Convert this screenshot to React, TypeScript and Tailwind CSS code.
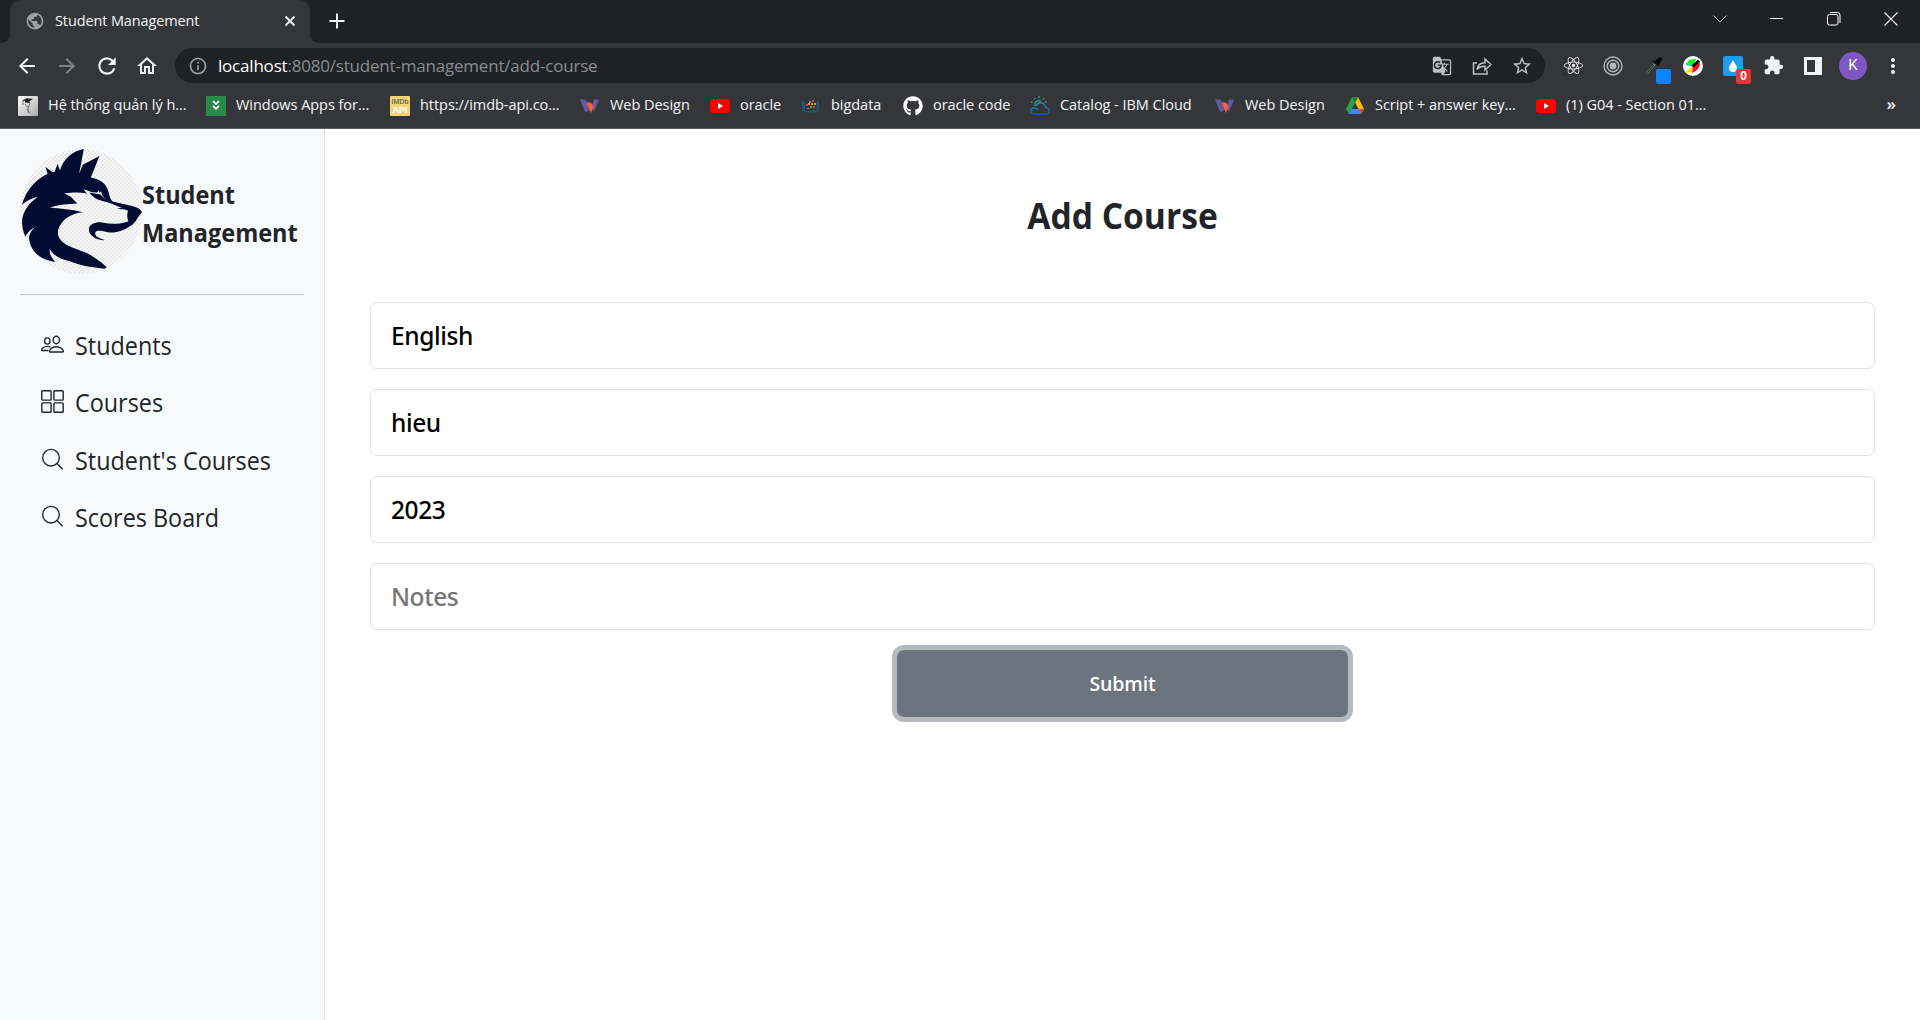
import type { ReactNode } from "react";
import { SiReact } from "react-icons/si";
import { FaGithub } from "react-icons/fa";
import {
  MdArrowBack,
  MdArrowForward,
  MdRefresh,
  MdOutlineHome,
  MdInfoOutline,
  MdStarBorder,
  MdGTranslate,
  MdExtension,
  MdMoreVert,
  MdPublic,
} from "react-icons/md";

function WolfLogo() {
  return (
    <svg viewBox="30 27 367 376" preserveAspectRatio="none" className="h-[125px] w-[122px] shrink-0">
      <defs>
        <pattern id="checks" width="12" height="12" patternUnits="userSpaceOnUse">
          <rect width="12" height="12" fill="#fafafa" />
          <rect width="6" height="6" fill="#e7e7e7" />
          <rect x="6" y="6" width="6" height="6" fill="#e7e7e7" />
        </pattern>
      </defs>
      <ellipse cx="213.500" cy="215" rx="183.500" ry="188" fill="url(#checks)" />
      <path
        fill="#020c33"
        d="M36 195 C46 156 75 118 113 102 L107 81 L127 96 L134 96 L143 71 L150 92 C160 55 192 32 222 27 L208 101 L219 74 L269 48 L243 113 C270 118 289 130 296 155 C300 171 302 179 309 185 C332 191 366 196 382 204 C392 208 397 214 396 219 C392 224 384 233 379 243 L369 254 C350 268 322 280 298 278 C286 276 274 270 261 274 C253 278 256 287 264 292 C270 296 278 299 286 301 C262 303 238 288 237 269 C238 252 258 246 277 248 C303 253 327 253 346 247 L356 245 C352 235 351 224 355 213 L345 209 L321 207 L336 204 C316 196 300 188 281 184 L250 178 L228 160 C206 157 190 158 163 160 L183 171 L202 191 C175 192 145 195 120 203 C150 207 185 208 218 217 C190 220 166 233 155 250 C142 264 141 286 150 297 C163 321 207 328 237 343 C260 356 280 372 291 383 L285 387 C250 384 210 378 180 365 C151 359 128 345 119 327 C118 345 127 355 136 367 C104 362 60 345 57 291 C60 279 66 270 75 262 C62 268 53 277 46 291 C27 246 34 207 84 171 C65 174 50 184 36 195 Z"
      />
      <path
        fill="#f7f7f8"
        d="M222 148 L247 157 L262 158 L267 151 L269 159 L274 154 L277 166 L290 182 L272 164 L238 158 C250 173 263 180 279 184 L254 181 C238 174 231 162 222 148 Z"
      />
    </svg>
  );
}

const YouTube = () => (
  <svg viewBox="0 0 20 20" className="size-5">
    <rect y="3" width="20" height="14" rx="3.500" fill="#f00" />
    <path d="M8 7 L13 10 L8 13 Z" fill="#fff" />
  </svg>
);

const WebDesign = () => (
  <svg viewBox="0 0 20 20" className="size-5">
    <path d="M0 3.500 H5.500 L9.500 14 L6.500 16 Q5 16 4.300 14 Z" fill="#6658a6" />
    <path d="M14 3.500 H19 L14 16 L11.500 11 Z" fill="#6658a6" />
    <path d="M6.500 6.500 Q12 5 13.500 11 L11 17 Z" fill="#fa6335" />
  </svg>
);

const Graduate = () => (
  <svg viewBox="0 0 20 20" className="size-5">
    <defs>
      <linearGradient id="silver" x1="0" y1="0" x2="1" y2="1">
        <stop offset="0" stopColor="#fff" />
        <stop offset="1" stopColor="#aaa" />
      </linearGradient>
    </defs>
    <rect width="20" height="20" rx="1" fill="url(#silver)" />
    <path d="M4 4.500 L9 2.200 L15 3 L11 5.500 Z M7 5 L12 5.500 L11.500 7 L7 6.500 Z" fill="#222" />
    <path d="M5 4.500 V9 M7.500 8 Q8 11.500 11 10.500 L12 7 M10 11 L11 17 L9 13" fill="none" stroke="#666" strokeWidth=".9" />
  </svg>
);

const WindowsApps = () => (
  <svg viewBox="0 0 20 20" className="size-5">
    <rect width="20" height="20" fill="#2a8a4a" />
    <path d="M7 5 L10 8 L13 5 M7 9.800 L10 12.800 L13 9.800" fill="none" stroke="#fff" strokeWidth="1.700" />
  </svg>
);

const ImdbApi = () => (
  <span className="flex size-5 flex-col items-center justify-center overflow-hidden rounded-[1px] bg-[#f2d479] font-['Liberation_Sans'] text-[7px] leading-[8px] font-bold">
    <span className="text-[#77714f]">IMDb</span>
    <span className="text-[9px] text-white">API</span>
  </span>
);

const BigData = () => (
  <svg viewBox="0 0 20 20" className="size-5">
    <path d="M1 5.500 V15 L8 17 L10 16 L12 17 L18 15 V5.500 L15.500 4.500 V14 L10 15 L4 14 V4.500 Z" fill="#20557a" />
    <path d="M5 8h2v2H5zM11 4h2v2h-2zM12 10h2v2h-2z" fill="#d9473a" />
    <path d="M8 5h2v2H8zM9 10h2v2H9zM6 12h2v1H6z" fill="#55a04a" />
    <path d="M7 7h2v2H7zM13 7h2v2h-2zM10 7h2v2h-2z" fill="#d79b36" />
  </svg>
);

const IbmCloud = () => (
  <svg viewBox="0 0 20 20" className="size-5" fill="none" strokeWidth="1.300">
    <defs>
      <linearGradient id="cloud" x1="0" y1="0" x2="0" y2="1">
        <stop offset="0" stopColor="#2f9a99" />
        <stop offset="1" stopColor="#1459b8" />
      </linearGradient>
    </defs>
    <path d="M4 18 H15.500 C20 18 20.500 12 15.500 11.500 C15 6 8.500 5 6 10 M4 18 C-.500 17 .200 12 4 12 Q7 12 8 14 M5 10 C3.500 6 8 3.500 11 5.500" stroke="url(#cloud)" />
    <path d="M9 0 V2 M4 2 L5 3.500 M1 6 L2.500 6.800 M14 2 L13 3.500 M16.500 5.500 L15 6.500" stroke="#2f9a99" />
  </svg>
);

const Drive = () => (
  <svg viewBox="0 0 20 20" className="size-5">
    <path d="M7 1 H13 L10 7 L4 18 L1 13 Z" fill="#25a34f" />
    <path d="M7 1 H13 L19 13 H13.500 Z" fill="#fdbb0a" />
    <path d="M10 1 H13 L10 7 L7 1 Z" fill="#16803a" />
    <path d="M4 18 L6.500 13 H19 L16 18 Z" fill="#4285f4" />
    <path d="M13.500 13 H19 L16 18 Z" fill="#ea4335" />
    <path d="M10 7 L13 13 H6.800 Z" fill="#35363a" />
  </svg>
);

const bookmarks: { label: string; width: string; icon: ReactNode }[] = [
  { label: "Hệ thống quản lý h...", width: "w-[188px]", icon: <Graduate /> },
  { label: "Windows Apps for...", width: "w-[184px]", icon: <WindowsApps /> },
  { label: "https://imdb-api.co...", width: "w-[190px]", icon: <ImdbApi /> },
  { label: "Web Design", width: "w-[130px]", icon: <WebDesign /> },
  { label: "oracle", width: "w-[91px]", icon: <YouTube /> },
  { label: "bigdata", width: "w-[102px]", icon: <BigData /> },
  { label: "oracle code", width: "w-[127px]", icon: <FaGithub className="size-5 text-white" /> },
  { label: "Catalog - IBM Cloud", width: "w-[185px]", icon: <IbmCloud /> },
  { label: "Web Design", width: "w-[130px]", icon: <WebDesign /> },
  { label: "Script + answer key...", width: "w-[191px]", icon: <Drive /> },
  { label: "(1) G04 - Section 01...", width: "w-[180px]", icon: <YouTube /> },
];

function Cell({ children }: { children: ReactNode }) {
  return <span className="flex w-10 shrink-0 items-center justify-center">{children}</span>;
}

function TabStrip() {
  return (
    <div className="flex h-[43px] bg-[#202124]">
      <span className="h-full w-2.5 bg-[#35363a]">
        <span className="block h-full rounded-br-[9px] bg-[#202124]" />
      </span>
      <div className="flex w-[300px] items-center rounded-t-[10px] bg-[#35363a] pr-[11px] pb-0.5 pl-[15px]">
        <MdPublic className="size-5 text-[#9aa0a6]" />
        <span className="ml-2.5 text-[14.5px] tracking-[-0.12px] text-[#f4f5f6]">Student Management</span>
        <svg viewBox="0 0 20 20" className="ml-auto size-[18px] text-[#f1f3f4]" stroke="currentColor" strokeWidth="2">
          <path d="M5 5 L15 15 M15 5 L5 15" />
        </svg>
      </div>
      <span className="h-full w-2.5 bg-[#35363a]">
        <span className="block h-full rounded-bl-[9px] bg-[#202124]" />
      </span>
      <svg viewBox="0 0 16 16" className="mt-[13px] ml-[9px] size-4" stroke="#f1f3f4" strokeWidth="2">
        <path d="M8 .500 V15.500 M.500 8 H15.500" />
      </svg>
      <div className="mr-px ml-auto flex h-[37px] items-center text-white">
        <span className="flex w-[57px] justify-center">
          <svg viewBox="0 0 14 8" className="h-2 w-3.5" fill="none" stroke="#cfcfcf" strokeWidth="1">
            <path d="M.500 .500 L7 7 L13.500 .500" />
          </svg>
        </span>
        <span className="flex w-[57px] justify-center">
          <span className="h-px w-[13px] bg-white" />
        </span>
        <span className="flex w-[57px] justify-center">
          <svg viewBox="0 0 14 14" className="size-3.5" fill="none" stroke="#fff" strokeWidth="1">
            <rect x=".5" y="2.500" width="10.500" height="10.500" rx="2" />
            <path d="M3 .500 H10.500 Q13 .500 13 3 V11" />
          </svg>
        </span>
        <span className="flex w-[57px] justify-center">
          <svg viewBox="0 0 14 14" className="size-3.5" stroke="#fff" strokeWidth="1.100">
            <path d="M.500 .500 L13.500 13.500 M13.500 .500 L.500 13.500" />
          </svg>
        </span>
      </div>
    </div>
  );
}

function Toolbar() {
  return (
    <div className="flex h-11 items-center bg-[#35363a] pt-px pr-[7px] pl-[7px] text-[#f1f3f4]">
      <Cell><MdArrowBack className="size-6" /></Cell>
      <Cell><MdArrowForward className="size-6 text-[#818387]" /></Cell>
      <Cell><MdRefresh className="size-[26px]" /></Cell>
      <Cell><MdOutlineHome className="size-6" /></Cell>
      <div className="ml-2 flex h-[35px] w-[1370px] items-center rounded-full bg-[#202124] pr-[3px] pl-[13px]">
        <MdInfoOutline className="size-5 text-[#9aa0a6]" />
        <span className="ml-2.5 text-[17px] tracking-[-0.2px] text-[#8a8d91]">
          <span className="text-white">localhost</span>:8080/student-management/add-course
        </span>
        <div className="ml-auto flex text-[#bdbfc2]">
          <Cell>
            <MdGTranslate className="size-5" />
          </Cell>
          <Cell>
            <svg viewBox="0 0 20 20" className="size-5" fill="none" stroke="currentColor" strokeWidth="1.500">
              <path d="M5 7 H1.500 V18 H15 V14.500" />
              <path d="M5 13.500 C6 8.500 9 6.800 13 6.800 V3 L19 8.500 L13 14 V10.300 C9.500 10.300 7 11 5 13.500 Z" />
            </svg>
          </Cell>
          <Cell><MdStarBorder className="size-[22px]" /></Cell>
        </div>
      </div>
      <div className="ml-2 flex items-center">
        <Cell>
          <span className="flex size-5 items-center justify-center bg-[#303134]"><SiReact className="size-[19px] text-[#e4e4e4]" /></span>
        </Cell>
        <Cell>
          <svg viewBox="0 0 20 20" className="size-5" fill="none" stroke="#b5b6b8" strokeWidth="1.400">
            <circle cx="10" cy="10" r="9" />
            <circle cx="10" cy="10" r="5.800" />
            <circle cx="10" cy="10" r="2.700" fill="#b5b6b8" />
          </svg>
        </Cell>
        <Cell>
          <span className="relative size-5">
            <svg viewBox="0 0 20 20" className="size-5">
              <path d="M4 17 L12 8" stroke="#7d8581" strokeWidth="2.400" />
              <path d="M4 17 L11 9" stroke="#174d23" strokeWidth="1.500" />
              <path d="M9 5 L15 10 L16.500 8 L19.500 3 L18 1 L15 2 L12 5 Z" fill="#08090a" />
            </svg>
            <span className="absolute top-[13px] left-[13px] size-[15px] rounded-[2px] bg-[#0a84ff]" />
          </span>
        </Cell>
        <Cell>
          <svg viewBox="0 0 20 20" className="size-5">
            <circle cx="10" cy="10" r="10" fill="#fff" />
            <path d="M10 10 L2.500 9 Q5 2 13 3 Z" fill="#15ed20" />
            <path d="M10 10 L3 9 L5 7 Z" fill="#00d5e0" />
            <path d="M10 10 L3 16 L8 17 Z" fill="#ffe500" />
            <path d="M10 10 L17 6 Q18 13 9 17 Z" fill="#fa0f22" />
            <path d="M3 17 L9 11" stroke="#ffd400" strokeWidth="1.500" />
            <path d="M9.500 10.500 L16 4.500" stroke="#050505" strokeWidth="2.800" />
          </svg>
        </Cell>
        <Cell>
          <span className="relative size-5 rounded-[2px] bg-[#1c9cf1]">
            <svg viewBox="0 0 20 20" className="size-5">
              <path d="M10 3.500 C10 6 14 9 14 12 A4 4 0 0 1 6 12 C6 9 10 6 10 3.500 Z" fill="#fff" />
            </svg>
            <span className="absolute top-[13px] left-[13px] flex size-[15px] items-center justify-center rounded-[2px] bg-[#e53535] font-['Liberation_Sans'] text-[12px] leading-none font-bold text-white">0</span>
          </span>
        </Cell>
        <Cell><MdExtension className="size-[21px]" /></Cell>
        <Cell>
          <span className="size-[18px] border-[3px] border-r-[7px] border-[#f1f3f4]" />
        </Cell>
        <Cell>
          <span className="flex size-7 items-center justify-center rounded-full bg-[#7e57c2] font-['Roboto'] text-[15px] text-white">K</span>
        </Cell>
        <Cell><MdMoreVert className="size-6" /></Cell>
      </div>
    </div>
  );
}

function BookmarksBar() {
  return (
    <div className="flex h-[42px] items-center border-b border-[#5c5c60] bg-[#35363a] pr-6 pb-[3px] pl-[18px] text-[14.5px] text-[#f4f5f6]">
      {bookmarks.map((b, i) => (
        <div key={i} className={`flex shrink-0 items-center gap-2.5 whitespace-nowrap ${b.width}`}>
          {b.icon}
          <span className="-mt-0.5 tracking-[-0.04px]">{b.label}</span>
        </div>
      ))}
      <span className="-mt-1 ml-auto text-[17px] font-semibold">»</span>
    </div>
  );
}

const PeopleIcon = () => (
  <svg viewBox="0 0 23 23" className="size-[23px]" fill="none" stroke="currentColor" strokeWidth="1.400">
    <ellipse cx="15.300" cy="7" rx="3.200" ry="3.700" />
    <ellipse cx="6.300" cy="8" rx="2.700" ry="3.100" />
    <path d="M9.300 19 H21.400 C22.600 19 22.500 17.900 21.800 16.900 C20.500 14.900 18.200 13.700 15.400 13.700 C12.400 13.700 10.100 14.900 8.900 16.900 C8.200 17.900 8.100 19 9.300 19 Z" />
    <path d="M7.300 17.500 H1.600 C.500 17.500 .500 16.500 1.100 15.700 C2.300 14 4.300 13.400 6.400 13.400 C7.600 13.400 8.600 13.600 9.400 14" />
  </svg>
);

const GridIcon = () => (
  <svg viewBox="0 0 23 23" className="size-[23px]" fill="none" stroke="currentColor" strokeWidth="1.400">
    <rect x=".8" y=".8" width="9.300" height="9.300" rx=".8" />
    <rect x="12.900" y=".8" width="9.300" height="9.300" rx=".8" />
    <rect x=".8" y="12.900" width="9.300" height="9.300" rx=".8" />
    <rect x="12.900" y="12.900" width="9.300" height="9.300" rx=".8" />
  </svg>
);

const SearchIcon = () => (
  <svg viewBox="0 0 23 23" className="size-[23px]" fill="none" stroke="currentColor" strokeWidth="1.400">
    <circle cx="10" cy="9.700" r="8.300" />
    <path d="M16 15.600 L21.600 21.200" />
  </svg>
);

const nav = [
  { label: "Students", Icon: PeopleIcon },
  { label: "Courses", Icon: GridIcon },
  { label: "Student's Courses", Icon: SearchIcon },
  { label: "Scores Board", Icon: SearchIcon },
];

function Sidebar() {
  return (
    <aside className="w-[325px] shrink-0 border-r border-[#dee2e6] bg-[#f8f9fb] px-5 pt-5 text-[#212529]">
      <div className="flex items-center">
        <WolfLogo />
        <div className="origin-left scale-x-[0.94] pt-0.5 text-[25px] leading-[38px] font-bold">
          Student
          <br />
          Management
        </div>
      </div>
      <hr className="mt-5 w-[284px] border-[#c2c4c7]" />
      <nav className="mt-[22px] flex flex-col pl-[21px]">
        {nav.map(({ label, Icon }) => (
          <a key={label} className="flex h-[57.5px] items-center gap-[11px] text-[25px]">
            <span className="mb-[3px]">
              <Icon />
            </span>
            <span className="origin-left scale-x-[0.935] pb-px whitespace-nowrap">{label}</span>
          </a>
        ))}
      </nav>
    </aside>
  );
}

function AddCourse() {
  const field =
    "h-[67px] w-full rounded-[7px] border border-[#dee2e6] bg-white px-5 font-['Noto_Sans'] text-[24.5px] font-medium tracking-[-0.4px] text-black outline-none placeholder:text-[#757575]";
  return (
    <main className="flex-1 px-[45px]">
      <h1 className="mt-[61px] scale-x-[0.96] text-center text-[35px] leading-[52px] font-bold text-[#212529]">
        Add Course
      </h1>
      <form className="mt-[60px] flex flex-col gap-5">
        <input className={field} defaultValue="English" />
        <input className={field} defaultValue="hieu" />
        <input className={field} defaultValue="2023" />
        <input className={field} placeholder="Notes" />
        <button
          type="button"
          className="mx-auto h-[67px] w-[451px] rounded-[7px] bg-[#6c757d] text-[19.5px] font-semibold tracking-[-0.2px] text-white ring-[5px] ring-[#b5babe]"
        >
          Submit
        </button>
      </form>
    </main>
  );
}

export default function App() {
  return (
    <div className="flex h-[1020px] w-[1920px] flex-col overflow-hidden bg-white font-['Open_Sans','Noto_Sans',sans-serif]">
      <TabStrip />
      <Toolbar />
      <BookmarksBar />
      <div className="flex flex-1">
        <Sidebar />
        <AddCourse />
      </div>
    </div>
  );
}
